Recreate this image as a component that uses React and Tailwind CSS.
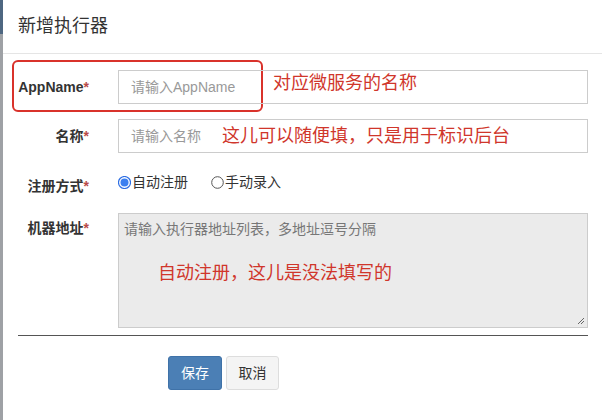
import React from 'react';

const FONT = { fontFamily: '"Liberation Sans", "Noto Sans CJK SC", sans-serif' };

const Radio = ({ checked, label }) => (
  <label className="flex items-center text-[14px] text-[#333] leading-[20px]">
    <svg width="13" height="13" viewBox="0 0 13 13" className="mr-[1px]">
      {checked ? (
        <>
          <circle cx="6.5" cy="6.5" r="6" fill="#ffffff" stroke="#2f6fe4" strokeWidth="1.2" />
          <circle cx="6.5" cy="6.5" r="4" fill="#3b7ff0" />
        </>
      ) : (
        <circle cx="6.5" cy="6.5" r="5.8" fill="#ffffff" stroke="#555" strokeWidth="1" />
      )}
    </svg>
    {label}
  </label>
);

const Label = ({ children, className = '' }) => (
  <div className={`w-[71px] shrink-0 text-right text-[14px] font-bold text-[#333] leading-[20px] ${className}`}>
    {children}
    <span className="text-[#b94a48]">*</span>
  </div>
);

const Note = ({ children, className = '' }) => (
  <span className={`absolute whitespace-nowrap text-[18px] leading-[24px] text-[#d0362b] ${className}`}>
    {children}
  </span>
);

export default function App() {
  return (
    <div className="w-[602px] h-[420px] flex bg-white overflow-hidden" style={FONT}>
      {/* backdrop edge */}
      <div className="w-[3px] shrink-0 flex flex-col">
        <div className="h-[34px] bg-[#4e6781]" />
        <div className="flex-1 bg-[#9ea1a5]" />
      </div>

      <div className="flex-1 flex flex-col">
        <div className="h-[54px] shrink-0 border-b border-[#e5e5e5] pl-[15px] flex items-center pb-[2px]">
          <h4 className="text-[18px] text-[#333] leading-[24px]">新增执行器</h4>
        </div>

        <div className="relative pl-[15px] pr-[14px] pt-[16px]">
          {/* red highlight box */}
          <div className="absolute left-[9px] top-[6px] w-[251px] h-[52px] border-2 border-[#d9322b] rounded-[6px]" />

          {/* AppName */}
          <div className="flex items-center h-[34px]">
            <Label>AppName</Label>
            <div className="relative ml-[29px] flex-1 h-[34px] border border-[#ccc] flex items-center pl-[12px] text-[14px] text-[#999]">
              请输入AppName
              <Note className="left-[154px] top-[0px]">对应微服务的名称</Note>
            </div>
          </div>

          {/* 名称 */}
          <div className="flex items-center h-[34px] mt-[15px]">
            <Label>名称</Label>
            <div className="relative ml-[29px] flex-1 h-[34px] border border-[#ccc] flex items-center pl-[12px] text-[14px] text-[#999]">
              请输入名称
              <Note className="left-[103px] top-[4px]">这儿可以随便填，只是用于标识后台</Note>
            </div>
          </div>

          {/* 注册方式 */}
          <div className="flex items-center h-[28px] mt-[16px]">
            <Label className="pt-[6px]">注册方式</Label>
            <div className="ml-[29px] flex items-center gap-[23px] pb-[2px]">
              <Radio checked label="自动注册" />
              <Radio label="手动录入" />
            </div>
          </div>

          {/* 机器地址 */}
          <div className="flex mt-[16px]">
            <Label className="pt-[5px]">机器地址</Label>
            <div className="relative ml-[29px] flex-1 h-[115px] border border-[#ccc] bg-[#ebebeb] pl-[5px] pt-[5px] text-[14px] leading-[20px] text-[#777]">
              请输入执行器地址列表，多地址逗号分隔
              <Note className="left-[39px] top-[47px]">自动注册，这儿是没法填写的</Note>
              <svg width="9" height="9" viewBox="0 0 9 9" className="absolute right-[2px] bottom-[2px]">
                <path d="M8 2 L2 8 M8 5 L5 8" stroke="#666" strokeWidth="1" />
              </svg>
            </div>
          </div>

          <div className="mt-[7px] border-t border-[#555]" />

          <div className="flex mt-[20px] pl-[150px] gap-[4px]">
            <button className="w-[54px] h-[34px] rounded-[3px] bg-[#4b7fb5] border border-[#3f72a8] text-white text-[14px]">保存</button>
            <button className="w-[53px] h-[34px] rounded-[3px] bg-[#f4f4f4] border border-[#ddd] text-[#333] text-[14px]">取消</button>
          </div>
        </div>
      </div>
    </div>
  );
}
